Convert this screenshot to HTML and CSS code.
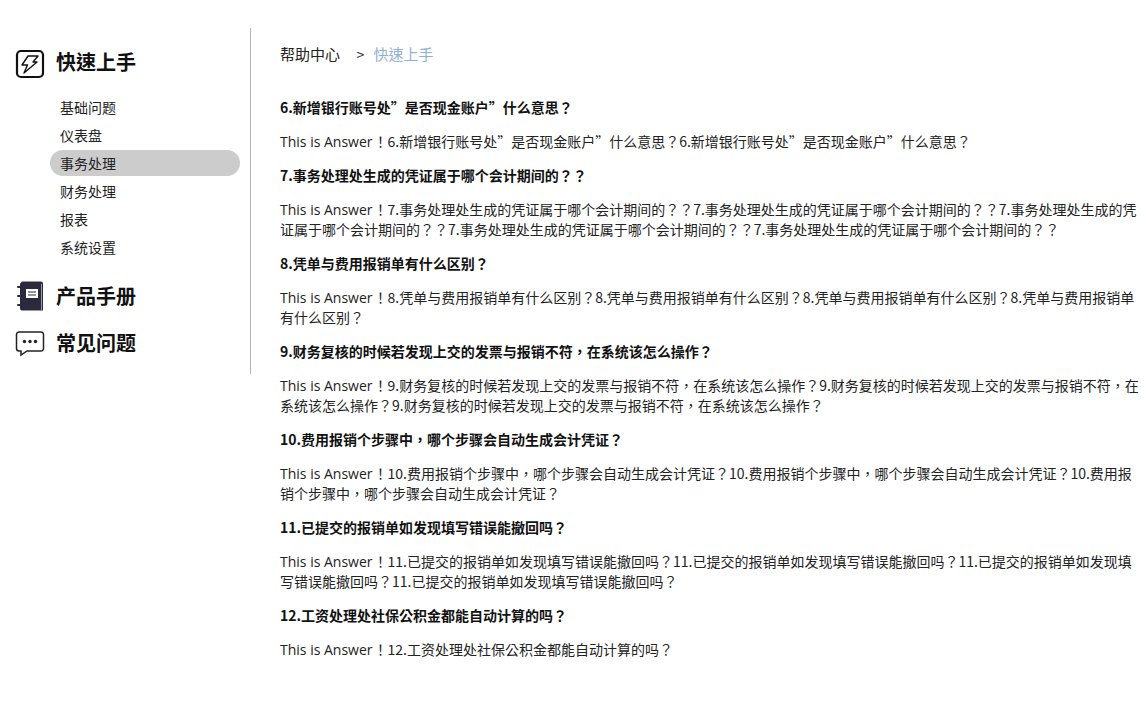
FILE: index.html
```html
<!DOCTYPE html>
<html lang="en">
<head>
    <meta charset="UTF-8">
    <meta name="viewport" content="width=device-width, initial-scale=1.0">
    <title>帮助中心</title>
    <link rel="stylesheet" href="styles.css">
</head>
<body>

<div class="page">
    <div class="side">
        <div class="group first">
            <svg class="icon" viewBox="0 0 30 30" width="30" height="30">
                <rect x="2" y="2" width="26" height="26" rx="4" fill="none" stroke="#111" stroke-width="2.2"/>
                <path d="M13 7H23L18 13H22L9 24L12.500 16H7Z" fill="none" stroke="#111" stroke-width="1.400" stroke-linejoin="round"/>
            </svg>
            <span>快速上手</span>
        </div>
        <ul class="menu">
            <li><a href="#">基础问题</a></li>
            <li><a href="#">仪表盘</a></li>
            <li class="active"><a href="#">事务处理</a></li>
            <li><a href="#">财务处理</a></li>
            <li><a href="#">报表</a></li>
            <li><a href="#">系统设置</a></li>
        </ul>
        <div class="group">
            <svg class="icon" viewBox="0 0 30 30" width="30" height="30">
                <path d="M7 0.500H26a2 2 0 0 1 2 2V29.500H7a2 2 0 0 1-2-2V2.500z" fill="#2a2a3c"/>
                <path d="M26.500 3V29" stroke="#9a9aa6" stroke-width="1"/>
                <rect x="11" y="8" width="12" height="9" fill="#fff"/>
                <path d="M13 11H21M13 14H21" stroke="#2a2a3c" stroke-width="1"/>
                <path d="M3 6H7M3 15H7M3 24H7" stroke="#2a2a3c" stroke-width="2" stroke-linecap="round" fill="none"/>
            </svg>
            <span>产品手册</span>
        </div>
        <div class="group">
            <svg class="icon" viewBox="0 0 30 30" width="30" height="30">
                <path d="M4 4h22a2.500 2.500 0 0 1 2.500 2.500v14a2.500 2.500 0 0 1-2.500 2.500H12l-6 4v-4H4a2.500 2.500 0 0 1-2.500-2.500v-14A2.500 2.500 0 0 1 4 4z" fill="#fff" stroke="#222" stroke-width="1.500"/>
                <circle cx="9.500" cy="13.500" r="1.700" fill="#222"/>
                <circle cx="15" cy="13.500" r="1.700" fill="#222"/>
                <circle cx="20.500" cy="13.500" r="1.700" fill="#222"/>
            </svg>
            <span>常见问题</span>
        </div>
    </div>

    <div class="main">
        <div class="crumb">
            <span>帮助中心</span>
            <span class="sep">&gt;</span>
            <span class="now">快速上手</span>
        </div>

        <div class="faq">
            <h4>6.新增银行账号处”是否现金账户”什么意思？</h4>
            <p><span class="en">This is Answer</span>！6.新增银行账号处”是否现金账户”什么意思？6.新增银行账号处”是否现金账户”什么意思？</p>
            <h4>7.事务处理处生成的凭证属于哪个会计期间的？？</h4>
            <p><span class="en">This is Answer</span>！7.事务处理处生成的凭证属于哪个会计期间的？？7.事务处理处生成的凭证属于哪个会计期间的？？7.事务处理处生成的凭证属于哪个会计期间的？？7.事务处理处生成的凭证属于哪个会计期间的？？7.事务处理处生成的凭证属于哪个会计期间的？？</p>
            <h4>8.凭单与费用报销单有什么区别？</h4>
            <p><span class="en">This is Answer</span>！8.凭单与费用报销单有什么区别？8.凭单与费用报销单有什么区别？8.凭单与费用报销单有什么区别？8.凭单与费用报销单有什么区别？</p>
            <h4>9.财务复核的时候若发现上交的发票与报销不符，在系统该怎么操作？</h4>
            <p><span class="en">This is Answer</span>！9.财务复核的时候若发现上交的发票与报销不符，在系统该怎么操作？9.财务复核的时候若发现上交的发票与报销不符，在系统该怎么操作？9.财务复核的时候若发现上交的发票与报销不符，在系统该怎么操作？</p>
            <h4>10.费用报销个步骤中，哪个步骤会自动生成会计凭证？</h4>
            <p><span class="en">This is Answer</span>！10.费用报销个步骤中，哪个步骤会自动生成会计凭证？10.费用报销个步骤中，哪个步骤会自动生成会计凭证？10.费用报销个步骤中，哪个步骤会自动生成会计凭证？</p>
            <h4>11.已提交的报销单如发现填写错误能撤回吗？</h4>
            <p><span class="en">This is Answer</span>！11.已提交的报销单如发现填写错误能撤回吗？11.已提交的报销单如发现填写错误能撤回吗？11.已提交的报销单如发现填写错误能撤回吗？11.已提交的报销单如发现填写错误能撤回吗？</p>
            <h4>12.工资处理处社保公积金都能自动计算的吗？</h4>
            <p><span class="en">This is Answer</span>！12.工资处理处社保公积金都能自动计算的吗？</p>
        </div>
    </div>
</div>

</body>
</html>
```

FILE: styles.css
```css
* {
    margin: 0;
    padding: 0;
    box-sizing: border-box;
}

body {
    background-color: #fff;
    color: #222;
    font-family: "Noto Sans CJK TC", "Open Sans", sans-serif;
    font-size: 14px;
}

li {
    list-style: none;
}

a {
    color: #222;
    text-decoration: none;
}

.page {
    display: flex;
    align-items: flex-start;
    padding-top: 28px;
}

.side {
    width: 251px;
    height: 346px;
    flex-shrink: 0;
    padding-top: 20px;
    border-right: 1px solid #b5b5b5;
}

.group {
    display: flex;
    align-items: center;
    height: 30px;
    margin-bottom: 17px;
    padding-left: 15px;
    color: #111;
    font-size: 20px;
    font-weight: 700;
}

.group.first {
    margin-bottom: 16px;
}

.group .icon {
    flex-shrink: 0;
    margin-right: 11px;
}

.group span {
    margin-bottom: 2px;
}

.group.first span {
    margin-bottom: 4px;
}

.group.first .icon {
    margin-top: 2px;
}

.menu {
    margin-bottom: 21px;
}

.menu li {
    width: 190px;
    height: 26px;
    margin: 0 0 2px 50px;
    padding-left: 10px;
    border-radius: 13px;
    line-height: 26px;
    font-size: 14px;
}

.menu .active {
    background-color: #ccc;
}

.main {
    flex: 1;
    padding: 15px 6px 0 29px;
}

.crumb {
    height: 22px;
    margin-bottom: 32px;
    line-height: 22px;
    font-size: 15px;
}

.crumb .sep {
    margin: 0 6px 0 13px;
    font-size: 14px;
}

.crumb .now {
    color: #8fb0d6;
}

.faq h4 {
    margin-bottom: 14px;
    line-height: 20px;
    font-size: 14px;
    font-weight: 700;
    color: #111;
}

.faq p {
    margin-bottom: 14px;
    line-height: 20px;
    font-size: 14px;
}

.en {
    margin-right: 1px;
    font-family: "Open Sans", sans-serif;
    line-height: 1;
}
```
